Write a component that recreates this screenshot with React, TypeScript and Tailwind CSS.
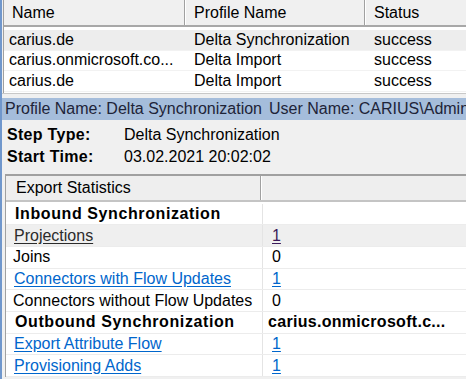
import React from "react";

type TRun = { name: string; profile: string; status: string; selected?: boolean };

type TStat = {
  label: string;
  value?: string;
  kind?: "head" | "link" | "visited" | "plain";
  shaded?: boolean;
};

const runs: TRun[] = [
  { name: "carius.de", profile: "Delta Synchronization", status: "success", selected: true },
  { name: "carius.onmicrosoft.co...", profile: "Delta Import", status: "success" },
  { name: "carius.de", profile: "Delta Import", status: "success" },
];

const stats: TStat[] = [
  { label: "Inbound Synchronization", kind: "head" },
  { label: "Projections", value: "1", kind: "visited", shaded: true },
  { label: "Joins", value: "0", kind: "plain" },
  { label: "Connectors with Flow Updates", value: "1", kind: "link" },
  { label: "Connectors without Flow Updates", value: "0", kind: "plain" },
  { label: "Outbound Synchronization", value: "carius.onmicrosoft.c...", kind: "head" },
  { label: "Export Attribute Flow", value: "1", kind: "link" },
  { label: "Provisioning Adds", value: "1", kind: "link" },
];

const StatRow = ({ s }: { s: TStat }) => {
  const labelCls =
    s.kind === "head"
      ? "font-bold tracking-[0.6px] text-black pl-[9px]"
      : s.kind === "link"
      ? "text-[#0066cc] underline underline-offset-2 pl-[8px]"
      : s.kind === "visited"
      ? "text-[#2b2b2b] underline underline-offset-2 pl-[8px]"
      : "text-black pl-[7px]";
  const valueCls =
    s.kind === "head"
      ? "font-bold tracking-[0.3px] text-black pl-[5px]"
      : s.kind === "link"
      ? "text-[#0066cc] underline underline-offset-2 pl-[9px]"
      : s.kind === "visited"
      ? "text-[#3a1a5a] underline underline-offset-2 pl-[9px]"
      : "text-black pl-[9px]";
  return (
    <div
      className={`flex h-[21.7px] items-center border-b border-[#ececec] ${
        s.shaded ? "bg-[#efefef]" : "bg-white"
      }`}
    >
      <div className={`w-[256px] shrink-0 whitespace-nowrap overflow-hidden ${labelCls}`}>
        {s.label}
      </div>
      <div className="h-full w-px bg-[#e4e4e4]" />
      <div className={`flex-1 whitespace-nowrap overflow-hidden ${valueCls}`}>
        {s.value ?? ""}
      </div>
    </div>
  );
};

const App = () => {
  return (
    <div className="w-[466px] h-[379px] overflow-hidden bg-[#f0f0f0] border-l-2 border-[#7097cc] font-['Liberation_Sans',Arial,sans-serif] text-[16px] leading-none text-black">
      {/* runs list */}
      <div className="ml-px border-l border-[#a0a0a0] bg-white">
        <div className="flex h-[27px] items-center bg-[#f0f0f0] border-b-2 border-[#a8a8a8]">
          <div className="w-[181px] shrink-0 h-full flex items-center pl-[8px] border-r border-[#a0a0a0]">
            Name
          </div>
          <div className="w-px h-full bg-white" />
          <div className="w-[179px] shrink-0 h-full flex items-center pl-[8px] border-r border-[#a0a0a0]">
            Profile Name
          </div>
          <div className="w-px h-full bg-white" />
          <div className="flex-1 h-full flex items-center pl-[8px]">Status</div>
        </div>
        <div className="h-[3px] bg-white" />
        {runs.map((r, i) => (
          <div
            key={i}
            className={`flex h-[20.5px] items-center border-b border-[#f2f2f2] ${
              r.selected ? "bg-[#ededed]" : "bg-white"
            }`}
          >
            <div className="w-[182px] shrink-0 pl-[5px] whitespace-nowrap overflow-hidden">{r.name}</div>
            <div className="w-[180px] shrink-0 pl-[8px] whitespace-nowrap">{r.profile}</div>
            <div className="flex-1 pl-[8px]">{r.status}</div>
          </div>
        ))}
        <div className="h-[1px] bg-white" />
      </div>
      <div className="h-[5px] border-t border-[#c8c8c8] bg-[#f0f0f0]" />

      {/* profile bar */}
      <div className="flex h-[22px] items-center bg-[#a5bddb] pl-[3px] text-[#1e2438] whitespace-nowrap overflow-hidden">
        <span>Profile Name: Delta Synchronization</span>
        <span className="ml-[7px]">User Name: CARIUS\Admini</span>
      </div>

      {/* step info */}
      <div className="pl-[5px] pt-[4px]">
        <div className="flex h-[22px] items-center">
          <span className="w-[117px] font-bold tracking-[0.3px]">Step Type:</span>
          <span>Delta Synchronization</span>
        </div>
        <div className="flex h-[22px] items-center">
          <span className="w-[117px] font-bold tracking-[0.3px]">Start Time:</span>
          <span>03.02.2021 20:02:02</span>
        </div>
      </div>

      {/* statistics grid */}
      <div className="ml-[3px] mt-[6px] border-l border-t-2 border-[#a0a0a0] bg-white">
        <div className="flex h-[26px] items-center bg-[#eeeeee] border-b-2 border-[#c4c4c4]">
          <div className="w-[255px] shrink-0 h-full flex items-center pl-[10px] border-r border-[#a0a0a0]">
            Export Statistics
          </div>
          <div className="w-px h-full bg-white" />
          <div className="flex-1 h-full" />
        </div>
        <div className="h-[2px] bg-white" />
        {stats.map((s, i) => (
          <StatRow key={i} s={s} />
        ))}
      </div>
    </div>
  );
};

export default App;
